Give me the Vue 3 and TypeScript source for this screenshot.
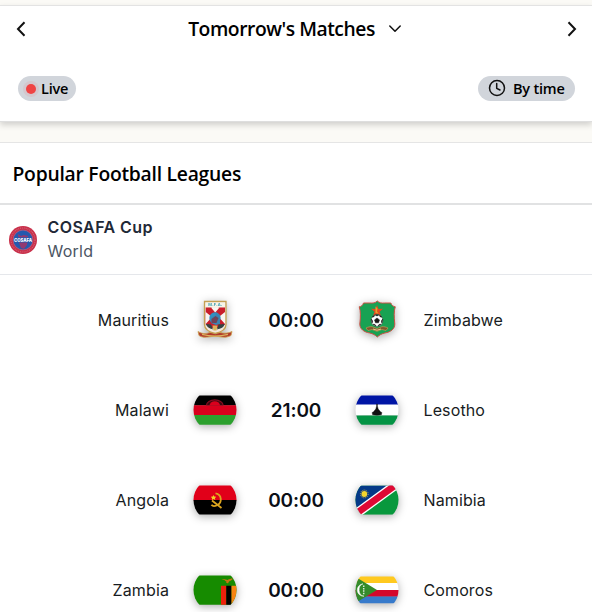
<script setup lang="ts">
type Crest =
  | 'mauritius' | 'zimbabwe' | 'malawi' | 'lesotho'
  | 'angola' | 'namibia' | 'zambia' | 'comoros'

interface Team { name: string; crest: Crest }
interface Match { home: Team; away: Team; time: string }

const matches: Match[] = [
  { home: { name: 'Mauritius', crest: 'mauritius' }, away: { name: 'Zimbabwe', crest: 'zimbabwe' }, time: '00:00' },
  { home: { name: 'Malawi', crest: 'malawi' }, away: { name: 'Lesotho', crest: 'lesotho' }, time: '21:00' },
  { home: { name: 'Angola', crest: 'angola' }, away: { name: 'Namibia', crest: 'namibia' }, time: '00:00' },
  { home: { name: 'Zambia', crest: 'zambia' }, away: { name: 'Comoros', crest: 'comoros' }, time: '00:00' },
]
</script>

<template>
  <main class="page">
    <header class="toolbar">
      <div class="day-nav">
        <button class="icon-btn" aria-label="Previous day">
          <svg width="10" height="16" viewBox="0 0 10 16"><path d="M8.500 1.300 2 8l6.500 6.700" class="stroke bold" /></svg>
        </button>
        <button class="day">
          <span class="day-label">Tomorrow's Matches</span>
          <svg width="14" height="10" viewBox="0 0 14 10"><path d="M1.8 2 7 7.300 12.200 2" class="stroke" /></svg>
        </button>
        <button class="icon-btn" aria-label="Next day">
          <svg width="10" height="16" viewBox="0 0 10 16"><path d="M1.500 1.300 8 8l-6.500 6.700" class="stroke bold" /></svg>
        </button>
      </div>
      <div class="filters">
        <button class="pill live"><span class="dot"></span><span>Live</span></button>
        <button class="pill by-time">
          <svg width="18" height="18" viewBox="0 0 18 18">
            <circle cx="9" cy="9" r="7.5" class="stroke" /><path d="M8.700 4.500v4.800l3.300 1.700" class="stroke" />
          </svg>
          <span>By time</span>
        </button>
      </div>
    </header>

    <section class="leagues">
      <h2 class="heading">Popular Football Leagues</h2>
      <div class="league">
        <svg class="league-logo" width="28" height="28" viewBox="0 0 28 28">
          <circle cx="14" cy="14" r="14" fill="#c9304a" />
          <circle cx="14" cy="14" r="12" fill="none" stroke="#e08b9b" stroke-width="1.2" stroke-dasharray="1 .9" opacity=".5" />
          <circle cx="14" cy="14" r="9.9" fill="#2459ae" stroke="#b76285" stroke-width=".7" />
          <path d="M9 8l3 2 3-1 4 1-1 9-3 4-3-1-2-5z" fill="#b72f5c" opacity=".75" />
          <path d="M5 11.300h18v5.200H5z" fill="#2459ae" />
          <text x="14" y="16" text-anchor="middle" textLength="18" lengthAdjust="spacingAndGlyphs" class="logo-text">COSAFA</text>
        </svg>
        <div class="league-names">
          <span class="league-name">COSAFA Cup</span>
          <span class="region">World</span>
        </div>
      </div>

      <div v-for="m in matches" :key="m.home.name" class="match">
        <span class="team home">{{ m.home.name }}</span>
        <template v-for="(t, i) in [m.home, m.away]" :key="t.name">
          <span v-if="i === 1" class="time">{{ m.time }}</span>
          <svg class="crest" width="44" height="44" viewBox="0 0 44 44">
            <defs>
              <clipPath :id="'round-' + t.crest"><circle cx="22" cy="22" r="21.5" /></clipPath>
            </defs>
            <g v-if="t.crest === 'mauritius'">
              <path d="M5 33.500c5 3 9 2 12 1h10c4 1 8 1 12-1l-1 4c-3 1.600-6 2-9 1.600-5-1-9-1-14 0-4 .4-7 0-9-1.600z" fill="#b23a2c" stroke="#c9a04b" stroke-width=".8" />
              <path d="M9 36.300c8 2.200 18 2.200 26 0" fill="none" stroke="#d9b45e" stroke-width="1.200" />
              <path d="M11.500 3.500h21.500v23c0 5-4.500 7.500-10.800 9-6.200-1.500-10.700-4-10.700-9z" fill="#f3e8de" stroke="#c4a052" stroke-width="1.300" />
              <path d="M12.700 9.500h6l3.500 4 3.500-4H32v17l-5 3-4.700 1-4.600-1-5-3z" fill="#c91d2b" />
              <path d="M18 9.500h8.500l-4.300 5z" fill="#f8f5f1" />
              <path d="M12.700 14l6.300 5-6.300 7zM32 14l-6.300 5 6.300 7z" fill="#f8f5f1" />
              <path d="M12.700 4.500H32V9H12.700z" fill="#f7f5e8" />
              <text x="22.300" y="8.200" text-anchor="middle" textLength="14" class="crest-text">M.F.A.</text>
              <circle cx="22" cy="20" r="5.700" fill="#318fc1" />
              <path d="M17.500 22c3-6 6-3 5.500-8l4 4v8l-4 1-5-2z" fill="#3a84b2" />
              <path d="M18.500 21l4-3 3 2-2 5h-5z" fill="#6f4258" />
              <path d="M13 26l5 .5 2 5c-3-1-6-2-7-5.500zM31.500 26l-6 .5-1.500 5c4-1 7-2 7.500-5.500z" fill="#344343" />
              <path d="M19.500 27.500h5l-1 5h-3z" fill="#d9b45b" />
            </g>
            <g v-else-if="t.crest === 'zimbabwe'">
              <path d="M22.300 3c2 2 4.500 2.300 7.500 2h6c1 2.500 2.500 3.500 4.500 3.800-1.500 4-1.300 10-.5 17.200 0 5-4 8-10 9-3 .7-5.500 2-7.500 4-2-2-4.500-3.300-7.500-4-6-1-10-4-10-9 .8-7 1-13-.6-17.200C6.200 8.500 7.700 7.500 8.500 5h6.300c3 .3 5.500 0 7.500-2z" fill="#18a253" stroke="#cd5044" stroke-width="1" />
              <path d="M22 7l1.500 4 4.500-.2-3.500 3 1.500 4.200-4-2.200-4 2.200 1.500-4.200-3.500-3 4.500.2z" fill="#e34a20" />
              <path d="M20.500 8.500l2 2-.5 3 1.500 2-3-.5z" fill="#e9a32c" />
              <path d="M11 30c2-1 4-1.500 6-1.300l5 1.800 5-1.800c2-.2 4 .3 6 1.300l-2 2.500-4-1-5 1.800-5-1.800-4 1z" fill="#7d582e" stroke="#d69d56" stroke-width=".6" />
              <path d="M18 31l4 1.200 4-1.200" fill="none" stroke="#f5d598" stroke-width=".9" />
              <circle cx="22" cy="22.500" r="5.900" fill="#fff" stroke="#303832" stroke-width=".5" />
              <path d="M22 20l2.500 1.900-1 2.900h-3l-1-2.900zM20.300 17l1.700 1 1.700-1-1.700-.3zM16.300 21l1.400 2-.6 2zM27.700 21l-1.400 2 .6 2zM18 26.200l2 .3 1 1.600zM26 26.200l-2 .3-1 1.600zM17 19l2-.2.500-1.500zM27 19l-2-.2-.5-1.500z" fill="#151515" stroke="#151515" stroke-width=".5" />
            </g>
            <g v-else :clip-path="`url(#round-${t.crest})`">
              <g v-if="t.crest === 'malawi'">
                <path d="M0 7.500h44v10H0z" fill="#000" /><path d="M0 17.300h44v10H0z" fill="#d9001d" /><path d="M0 27.100h44v9.700H0z" fill="#2ca02e" />
                <path d="M13.500 17.300a8.300 5.500 0 0 1 16.600 0" fill="#3c080f" stroke="#870c20" stroke-width="1.200" />
                <path d="M16.500 17.500a5.300 4.300 0 0 1 10.600 0z" fill="#d9001d" />
              </g>
              <g v-else-if="t.crest === 'lesotho'">
                <path d="M0 7.500h44V17H0z" fill="#0015a5" /><path d="M0 16.500h44v11H0z" fill="#fff" /><path d="M0 27.500h44v9.300H0z" fill="#049344" />
                <path d="M21.600 16h.8v2l.8 3 2.500 3 1.200.5-.5 2.300c-2.900.6-5.900.6-8.800 0l-.5-2.300 1.200-.5 2.500-3 .8-3z" fill="#111" stroke="#111" stroke-width=".4" />
              </g>
              <g v-else-if="t.crest === 'angola'">
                <path d="M0 7.500h44v15H0z" fill="#e10019" /><path d="M0 22h44v14.500H0z" fill="#000" />
                <path d="M22.500 15.300c6.500 1 7 9.500 1.500 12-2 1-4.500 1-5.500-.5M19 22.500l9.500 7.500" fill="none" stroke="#dca51e" stroke-width="1.800" />
                <path d="M20.500 17l.8 1.600 1.900.2-1.300 1.400.4 1.900-1.800-1-1.700 1 .3-1.900-1.300-1.400 1.900-.2z" fill="#f1d322" />
              </g>
              <svg v-else-if="t.crest === 'namibia'" y="7.500" width="44" height="29.300" viewBox="0 7.500 44 29.300">
                <path d="M0 7.500h44v29.300H0z" fill="#08983d" /><path d="M0 7.500h38L0 35z" fill="#043987" />
                <path d="M-3 38.700L46 3" stroke="#fff" stroke-width="9.500" />
                <path d="M-3 38.700L46 3" stroke="#df0934" stroke-width="6.800" />
                <circle cx="9.300" cy="16" r="3.900" fill="none" stroke="#c7ad3e" stroke-width="1" stroke-dasharray="1 1" />
                <circle cx="9.300" cy="16" r="2.900" fill="#f3d52c" />
              </svg>
              <g v-else-if="t.crest === 'zambia'">
                <path d="M0 7.500h44v29.300H0z" fill="#168b00" /><path d="M28 17.800h5.400v19H28z" fill="#ed210b" /><path d="M33.300 17.800h5.200v19h-5.200z" fill="#050100" /><path d="M38.500 17.800H44v19h-5.500z" fill="#f88412" />
                <path d="M28.500 11c3-.5 5 .8 6 1 2-1 3-1.500 5.500-1.500-1 1-1 1.500-2 2l-2 1-1 2-2-1 .5-1-2-.7 1-.3z" fill="#c77413" />
              </g>
              <g v-else>
                <path d="M0 8.500h44v6.800H0z" fill="#ffc91f" /><path d="M0 15h44v7H0z" fill="#fff" /><path d="M0 22h44v6.700H0z" fill="#d4072c" /><path d="M0 28.500h44v6.800H0z" fill="#377acb" />
                <path d="M0 8.500L22 22 0 35.300z" fill="#358b2b" />
                <path d="M8 15.800a6.200 6.200 0 1 0 1 12.400 5.800 6.400 0 0 1-1-12.400z" fill="#fff" stroke="#fff" stroke-width=".5" />
                <path d="M8.700 17.500v9" stroke="#d8ead5" stroke-width="1.500" stroke-dasharray="1.500 .9" />
              </g>
            </g>
          </svg>
        </template>
        <span class="team">{{ m.away.name }}</span>
      </div>
    </section>
  </main>
</template>

<style>
body { background: #fbfaf6; overflow: hidden; }
</style>

<style scoped>
.page {
  box-sizing: border-box;
  height: 612px;
  padding-top: 5px;
  overflow: hidden;
  background: #fbfaf6;
  color: #000;
  font-family: Inter, sans-serif;
}
button {
  margin: 0;
  padding: 0;
  border: 0;
  background: none;
  color: inherit;
  font: inherit;
}
svg { display: block; flex: none; }
.stroke { fill: none; stroke: #111; stroke-width: 1.5; stroke-linecap: round; stroke-linejoin: round; }
.bold { stroke-width: 2; stroke-linecap: butt; stroke-linejoin: miter; }
.toolbar {
  box-sizing: border-box;
  height: 117px;
  border-top: 1px solid #e3e3e3;
  border-bottom: 1px solid #dedede;
  background: #fff;
  box-shadow: 0 3px 6px rgba(0, 0, 0, .17);
  font-family: "Open Sans", sans-serif;
}
.day-nav {
  display: flex;
  align-items: center;
  justify-content: space-between;
  height: 45px;
  padding: 0 15px 0 16px;
}
.day { display: flex; align-items: center; gap: 13px; padding-right: 3px; }
.day-label { width: 187px; font-size: 19.3px; font-weight: 550; letter-spacing: -.46px; white-space: nowrap; }
.filters {
  display: flex;
  justify-content: space-between;
  padding: 25px 17px 0 18px;
}
.pill {
  display: flex;
  align-items: center;
  box-sizing: border-box;
  height: 25px;
  border-radius: 13px;
  background: #d1d5db;
  font-size: 14.5px;
  font-weight: 550;
  letter-spacing: -.2px;
  white-space: nowrap;
}
.live { width: 58px; gap: 5px; padding-left: 8px; }
.dot { width: 10px; height: 10px; border-radius: 50%; background: #ef4444; box-shadow: 0 0 0 3px rgba(239, 68, 68, .09); }
.by-time { width: 97px; gap: 7px; padding-left: 10px; }
.by-time svg { margin-top: -1px; }
.leagues { margin-top: 20px; border-top: 1px solid #e5e5e5; background: #fff; }
.heading {
  height: 60px;
  margin: 0;
  padding-left: 12.5px;
  border-bottom: 2px solid #e1e2e3;
  font: 550 19.3px/62px "Open Sans", sans-serif;
  letter-spacing: -.24px;
}
.league {
  display: flex;
  align-items: center;
  gap: 10.5px;
  box-sizing: border-box;
  height: 70px;
  padding: 0 0 0 9px;
  border-bottom: 1px solid #e5e7eb;
}
.logo-text { fill: #fff; font: 800 5px Inter, sans-serif; }
.crest-text { fill: #3d9cae; font: 700 4px Inter, sans-serif; }
.league-names { display: flex; flex-direction: column; margin-top: -2px; font-size: 16px; line-height: 24px; }
.league-name { color: #1f2937; font-weight: 600; letter-spacing: .42px; }
.region { color: #4b5563; letter-spacing: .25px; }
.match {
  display: grid;
  grid-template-columns: 1fr 44px 118px 44px 1fr;
  align-items: center;
  height: 90px;
}
.team { padding: 0 24.5px; color: #181c22; font-size: 16px; line-height: 24px; letter-spacing: .12px; }
.home { padding-right: 24px; text-align: right; }
.time { padding-top: 1px; color: #0b0f16; font-size: 19px; font-weight: 600; letter-spacing: -.1px; text-align: center; }
.crest { overflow: visible; filter: drop-shadow(0 2px 4px rgba(0, 0, 0, .32)); }
</style>
